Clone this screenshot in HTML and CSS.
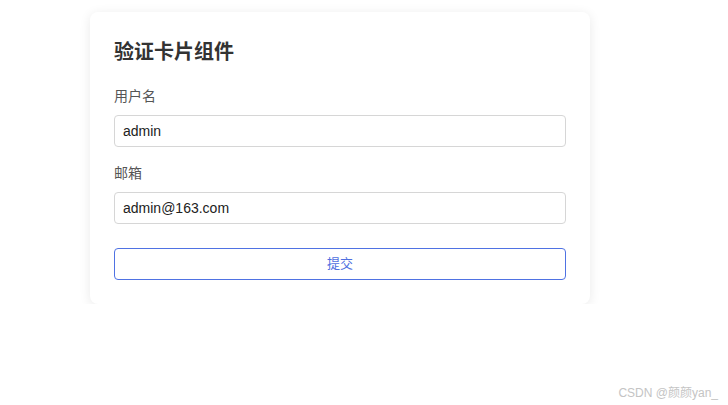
FILE: index.html
```html
<!DOCTYPE html>
<html lang="zh">
<head>
<meta charset="utf-8">
<link rel="stylesheet" href="styles.css">
</head>
<body>
<div class="page">
  <form class="card">
    <h2 class="title">验证卡片组件</h2>
    <div class="field">
      <label class="label">用户名</label>
      <input class="input" type="text" value="admin">
    </div>
    <div class="field">
      <label class="label">邮箱</label>
      <input class="input" type="text" value="admin@163.com">
    </div>
    <button class="submit" type="button">提交</button>
  </form>
</div>
<div class="watermark">CSDN @颜颜yan_</div>
</body>
</html>
```
FILE: styles.css
```css
html, body {
  margin: 0;
  padding: 0;
  background: #fff;
  font-family: "Liberation Sans", "Noto Sans CJK SC", sans-serif;
}
.page {
  padding: 12px 0 0 90px;
}
.card {
  width: 500px;
  box-sizing: border-box;
  padding: 24px;
  background: #fff;
  border-radius: 8px;
  box-shadow: 0 2px 12px rgba(0, 0, 0, 0.09);
  display: flex;
  flex-direction: column;
}
.title {
  margin: 0 0 18px;
  font-size: 20px;
  line-height: 32px;
  font-weight: bold;
  color: #333;
}
.field {
  display: flex;
  flex-direction: column;
  gap: 9px;
  margin-bottom: 16px;
}
.field + .field {
  margin-bottom: 24px;
}
.label {
  font-size: 14px;
  line-height: 20px;
  color: #555;
}
.input {
  height: 32px;
  box-sizing: border-box;
  border: 1px solid #d6d6d6;
  border-radius: 4px;
  padding: 0 8px;
  font-family: "Liberation Sans", "Noto Sans CJK SC", sans-serif;
  font-size: 14px;
  color: #222;
  outline: none;
}
.submit {
  height: 32px;
  padding: 0 0 3px;
  border: 1px solid #4f72e3;
  border-radius: 4px;
  background: #fff;
  color: #4f6fe0;
  font-family: "Liberation Sans", "Noto Sans CJK SC", sans-serif;
  font-size: 13px;
  cursor: pointer;
}
.watermark {
  position: absolute;
  right: 10px;
  bottom: 5px;
  font-size: 12px;
  color: #c4c4c4;
}
```
